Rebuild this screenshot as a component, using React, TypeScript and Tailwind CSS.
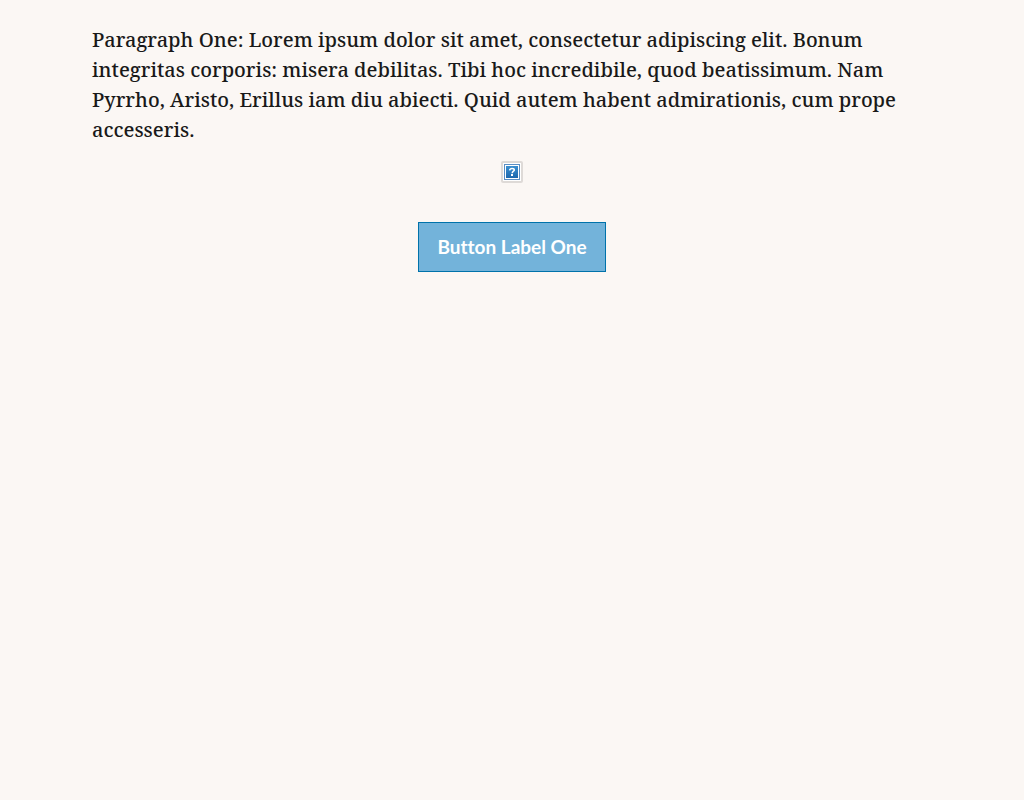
const PARAGRAPH =
  "Paragraph One: Lorem ipsum dolor sit amet, consectetur adipiscing elit. Bonum integritas corporis: misera debilitas. Tibi hoc incredibile, quod beatissimum. Nam Pyrrho, Aristo, Erillus iam diu abiecti. Quid autem habent admirationis, cum prope accesseris.";

function MissingImage() {
  return (
    <svg width="22" height="22" viewBox="0 0 22 22" role="img" aria-label="Missing image">
      <defs>
        <linearGradient id="tile" x1="0" y1="0" x2="0" y2="1">
          <stop offset="0" stopColor="#3b8fd0" />
          <stop offset="1" stopColor="#1d68ad" />
        </linearGradient>
      </defs>
      <rect x="0" y="0" width="22" height="22" rx="2" fill="#dedad7" />
      <rect x="2" y="2" width="18" height="18" fill="#ffffff" />
      <rect x="3" y="3" width="16" height="16" fill="#5b8fc4" />
      <rect x="4" y="4" width="14" height="14" fill="#ffffff" />
      <rect x="5" y="5" width="12" height="12" fill="url(#tile)" />
      <path
        d="M8.6 9.3C8.8 7.8 10 7.4 11.1 7.4C12.5 7.4 13.3 8 13.3 9C13.3 10.2 11.2 10.3 11.2 12.2"
        fill="none"
        stroke="#ffffff"
        strokeWidth="1.5"
      />
      <rect x="10" y="13" width="2" height="2" fill="#ffffff" />
    </svg>
  );
}

export default function App() {
  return (
    <main className="min-h-screen bg-[#fbf7f4] px-[92px] pt-[25px] text-[#191919]">
      <p className="font-['Noto_Serif','Liberation_Serif',serif] text-[20px] font-medium leading-[30px]">
        {PARAGRAPH}
      </p>
      <div className="mt-4 flex justify-center">
        <MissingImage />
      </div>
      <div className="mt-[39px] flex justify-center">
        <button
          type="button"
          className="h-[50px] border border-[#0072aa] bg-[#73b3da] px-[18px] font-['Lato',sans-serif] text-[19px] font-bold text-white [font-variant-ligatures:none]"
        >
          Button Label One
        </button>
      </div>
    </main>
  );
}
